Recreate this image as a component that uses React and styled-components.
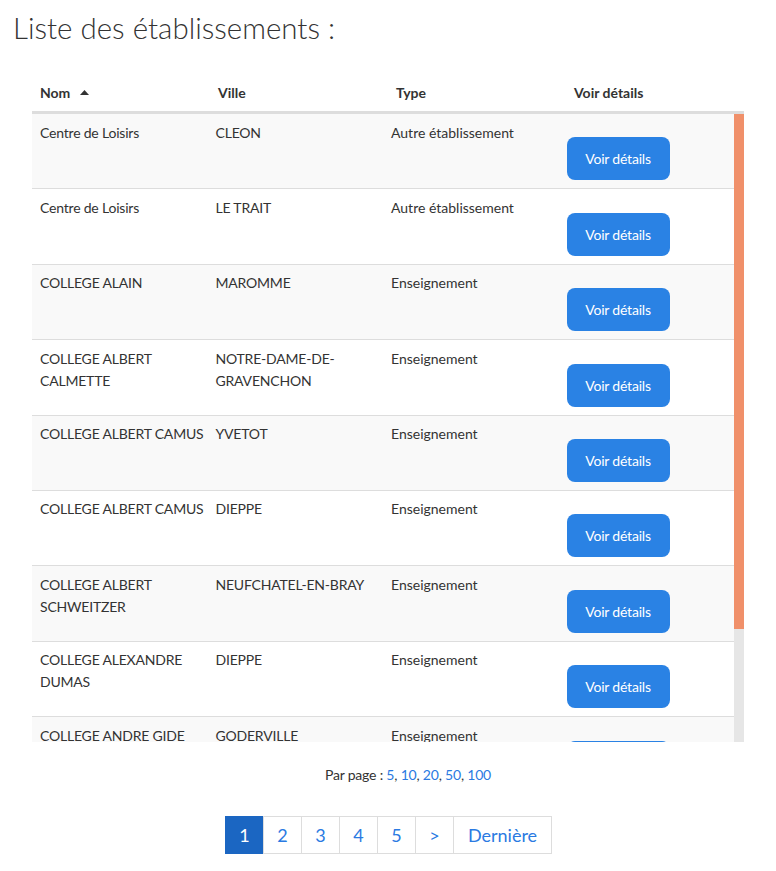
import styled, { createGlobalStyle } from 'styled-components'

const GlobalStyle = createGlobalStyle`
  body {
    margin: 0;
    background: #fff;
    font-family: Lato, 'Liberation Sans', sans-serif;
    color: #333;
  }
`

const Page = styled.div`
  padding: 0 32px 0 13px;
`

const Title = styled.h1`
  margin: 0;
  padding-top: 8px;
  font-size: 29.5px;
  font-weight: 300;
  line-height: 40px;
  color: #333;
`

const TableWrap = styled.div`
  margin: 24px 0 0 19px;
`

const Head = styled.div`
  display: grid;
  grid-template-columns: repeat(4, minmax(0, 1fr));
  border-bottom: 3px solid #ddd;
`

const HeadCell = styled.div`
  padding: 9px 8px 7px;
  font-size: 14px;
  font-weight: 700;
  line-height: 23px;
  display: flex;
  align-items: center;
  gap: 10px;
`

const Body = styled.div`
  display: flex;
  height: 628px;
`

const Rows = styled.div`
  flex: 1;
  min-width: 0;
  overflow: hidden;
`

// scrollbar as drawn in the page theme (track + orange thumb)
const Track = styled.div`
  width: 10px;
  flex-shrink: 0;
  background: #e6e6e6;
`

const Thumb = styled.div`
  background: #f0906a;
`

const Row = styled.div`
  display: grid;
  grid-template-columns: repeat(4, minmax(0, 1fr));
  background: ${(p) => (p.$striped ? '#f9f9f9' : '#fff')};
  border-bottom: 1px solid #ddd;
`

const Cell = styled.div`
  padding: 7.5px 8px 8px;
  font-size: 14px;
  line-height: 22px;
  white-space: nowrap;
  letter-spacing: ${(p) => (p.$caps ? '-0.2px' : '0')};
`

const DetailButton = styled.button`
  display: block;
  margin-top: 15.9px;
  width: 103px;
  height: 43px;
  border: none;
  border-radius: 8px;
  background: #2a82e4;
  color: #fff;
  font-family: inherit;
  font-size: 14px;
  letter-spacing: -0.2px;
  cursor: pointer;
`

const PerPage = styled.div`
  margin-top: 22px;
  padding-left: 40px;
  text-align: center;
  font-size: 14px;
  line-height: 22px;
  letter-spacing: -0.2px;
`

const Link = styled.a`
  color: #2a7ae2;
  text-decoration: none;
`

const Pager = styled.ul`
  display: flex;
  justify-content: center;
  list-style: none;
  margin: 30px 0 0;
  padding: 0 0 0 2px;
`

const PageItem = styled.li`
  min-width: 39px;
  height: 38px;
  padding: 0 ${(p) => (p.$wide ? '14px' : '0')};
  box-sizing: border-box;
  display: flex;
  align-items: center;
  justify-content: center;
  border: 1px solid #ddd;
  margin-left: -1px;
  font-size: 18px;
  color: ${(p) => (p.$active ? '#fff' : '#2a7ae2')};
  background: ${(p) => (p.$active ? '#1b66c2' : '#fff')};
  border-color: ${(p) => (p.$active ? '#1b66c2' : '#ddd')};
`

const rows = [
  [['Centre de Loisirs'], ['CLEON'], 'Autre établissement'],
  [['Centre de Loisirs'], ['LE TRAIT'], 'Autre établissement'],
  [['COLLEGE ALAIN'], ['MAROMME'], 'Enseignement'],
  [['COLLEGE ALBERT', 'CALMETTE'], ['NOTRE-DAME-DE-', 'GRAVENCHON'], 'Enseignement'],
  [['COLLEGE ALBERT CAMUS'], ['YVETOT'], 'Enseignement'],
  [['COLLEGE ALBERT CAMUS'], ['DIEPPE'], 'Enseignement'],
  [['COLLEGE ALBERT', 'SCHWEITZER'], ['NEUFCHATEL-EN-BRAY'], 'Enseignement'],
  [['COLLEGE ALEXANDRE', 'DUMAS'], ['DIEPPE'], 'Enseignement'],
  [['COLLEGE ANDRE GIDE'], ['GODERVILLE'], 'Enseignement'],
  [['COLLEGE ANDRE', 'MAUROIS'], ['ELBEUF'], 'Enseignement'],
]

const Lines = ({ lines }) =>
  lines.map((l, i) => (
    <span key={i}>
      {i > 0 && <br />}
      {l}
    </span>
  ))

const SortUp = () => (
  <svg width='9' height='5' viewBox='0 0 9 5'>
    <path d='M0 5 L4.5 0 L9 5 Z' fill='#333' />
  </svg>
)

export default function App() {
  return (
    <Page>
      <GlobalStyle />
      <Title>Liste des établissements :</Title>
      <TableWrap>
        <Head>
          <HeadCell>
            Nom <SortUp />
          </HeadCell>
          <HeadCell>Ville</HeadCell>
          <HeadCell>Type</HeadCell>
          <HeadCell>Voir détails</HeadCell>
        </Head>
        <Body>
          <Rows>
            {rows.map(([nom, ville, type], i) => (
              <Row key={i} $striped={i % 2 === 0}>
                <Cell $caps>
                  <Lines lines={nom} />
                </Cell>
                <Cell $caps>
                  <Lines lines={ville} />
                </Cell>
                <Cell>{type}</Cell>
                <Cell>
                  <DetailButton>Voir détails</DetailButton>
                </Cell>
              </Row>
            ))}
          </Rows>
          <Track>
            <Thumb style={{ height: 515 }} />
          </Track>
        </Body>
        <PerPage>
          Par page : <Link href='#'>5</Link>, <Link href='#'>10</Link>,{' '}
          <Link href='#'>20</Link>, <Link href='#'>50</Link>,{' '}
          <Link href='#'>100</Link>
        </PerPage>
        <Pager>
          <PageItem $active>1</PageItem>
          <PageItem>2</PageItem>
          <PageItem>3</PageItem>
          <PageItem>4</PageItem>
          <PageItem>5</PageItem>
          <PageItem>&gt;</PageItem>
          <PageItem $wide>Dernière</PageItem>
        </Pager>
      </TableWrap>
    </Page>
  )
}
